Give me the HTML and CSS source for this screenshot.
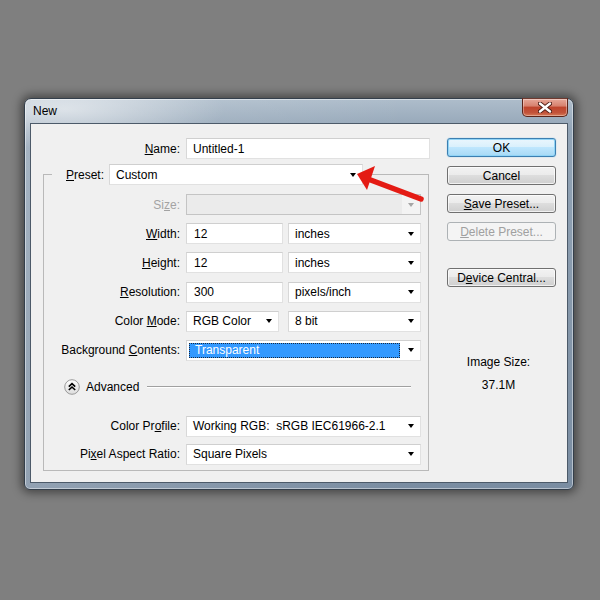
FILE: index.html
```html
<!DOCTYPE html>
<html>
<head>
<meta charset="utf-8">
<title>New</title>
<link rel="stylesheet" href="styles.css">
</head>
<body>
<div class="window">
  <div class="titlebar">
    <span class="title">New</span>
    <div class="close">
      <svg width="14" height="11" viewBox="0 0 14 11"><path d="M2 1.5 L12 9.5 M12 1.5 L2 9.5" stroke="#4a1a12" stroke-width="4.2" stroke-linecap="round"/><path d="M2 1.5 L12 9.5 M12 1.5 L2 9.5" stroke="#ffffff" stroke-width="2.4" stroke-linecap="round"/></svg>
    </div>
  </div>
  <div class="client">
    <div class="main">
      <div class="row name-row">
        <span class="lbl lbl-name"><u>N</u>ame:</span>
        <div class="field input w-name">Untitled-1</div>
      </div>
      <fieldset class="group">
        <legend class="legend">
          <span class="lbl-preset"><u>P</u>reset:</span>
          <div class="field select w-preset">Custom<i class="arr"></i></div>
        </legend>
        <div class="rows">
          <div class="row"><span class="lbl dis">Si<u>z</u>e:</span><div class="field select disabled w-full"><span class="arrbox"><i class="arr grey"></i></span></div></div>
          <div class="row"><span class="lbl"><u>W</u>idth:</span><div class="field input w-num">12</div><div class="field select w-unit">inches<i class="arr"></i></div></div>
          <div class="row"><span class="lbl"><u>H</u>eight:</span><div class="field input w-num">12</div><div class="field select w-unit">inches<i class="arr"></i></div></div>
          <div class="row"><span class="lbl"><u>R</u>esolution:</span><div class="field input w-num">300</div><div class="field select w-unit">pixels/inch<i class="arr"></i></div></div>
          <div class="row"><span class="lbl">Color <u>M</u>ode:</span><div class="field select w-mode">RGB Color<i class="arr"></i></div><div class="field select w-unit">8 bit<i class="arr"></i></div></div>
          <div class="row"><span class="lbl">Background <u>C</u>ontents:</span><div class="field select w-full sel-box"><span class="hl">Transparent</span><i class="arr"></i></div></div>
        </div>
        <div class="adv">
          <span class="adv-btn"><svg width="16" height="16" viewBox="0 0 16 16"><circle cx="8" cy="8" r="7.3" fill="url(#g)" stroke="#9a9a9a"/><defs><linearGradient id="g" x1="0" y1="0" x2="0" y2="1"><stop offset="0" stop-color="#ffffff"/><stop offset="1" stop-color="#dcdcdc"/></linearGradient></defs><path d="M4.8 7.6 L8 4.6 L11.2 7.6 M4.8 11 L8 8 L11.2 11" fill="none" stroke="#000" stroke-width="1.6"/></svg></span>
          <span class="adv-text">Advanced</span>
          <span class="adv-line"></span>
        </div>
        <div class="rows rows2">
          <div class="row"><span class="lbl">Color Pr<u>o</u>file:</span><div class="field select w-full">Working RGB:&nbsp; sRGB IEC61966-2.1<i class="arr"></i></div></div>
          <div class="row"><span class="lbl">Pi<u>x</u>el Aspect Ratio:</span><div class="field select w-full">Square Pixels<i class="arr"></i></div></div>
        </div>
      </fieldset>
    </div>
    <div class="side">
      <div class="btn default">OK</div>
      <div class="btn">Cancel</div>
      <div class="btn"><u>S</u>ave Preset...</div>
      <div class="btn dis-btn"><u>D</u>elete Preset...</div>
      <div class="btn btn-dc">D<u>e</u>vice Central...</div>
      <div class="size-lbl">Image Size:</div>
      <div class="size-val">37.1M</div>
    </div>
  </div>
</div>
<svg class="red-arrow" width="90" height="60" viewBox="0 0 90 60">
  <path d="M28 29 L81 49" stroke="#e41b14" stroke-width="5.5" stroke-linecap="round"/>
  <path d="M17 24 L35 16 L27 40 Z" fill="#e41b14"/>
</svg>
</body>
</html>
```

FILE: styles.css
```css
html, body {
  margin: 0;
  padding: 0;
}
body {
  background: #7f7f7f;
  font-family: "Liberation Sans", Arial, sans-serif;
  font-size: 12px;
  color: #000;
  width: 600px;
  height: 600px;
  overflow: hidden;
  position: relative;
}
u { text-decoration: underline; text-underline-offset: 1px; }

.window {
  margin: 98px 0 0 24px;
  width: 550px;
  height: 392px;
  box-sizing: border-box;
  border: 1px solid #343f4b;
  border-radius: 7px 7px 6px 6px;
  padding: 0 5px;
  display: flex;
  flex-direction: column;
  background:
    radial-gradient(ellipse 160px 40px at 40px 10px, rgba(255,255,255,0.55), rgba(255,255,255,0) 100%),
    linear-gradient(90deg, rgba(255,255,255,0.18), rgba(255,255,255,0) 70%),
    linear-gradient(180deg, #aebdcb 0%, #92a4b6 8%, #8496a9 60%, #7a8da2 100%);
  box-shadow: 0 0 10px 3px rgba(0,0,0,0.45), inset 0 0 0 1px rgba(255,255,255,0.45);
}
.titlebar {
  height: 24px;
  display: flex;
  align-items: flex-start;
}
.title {
  line-height: 24px;
  padding-left: 3px;
  font-size: 12px;
}
.close {
  margin-left: auto;
  margin-top: -1px;
  width: 46px;
  height: 19px;
  box-sizing: border-box;
  border: 1px solid #5c2419;
  border-top-color: #6e3a30;
  border-radius: 0 0 5px 5px;
  background: linear-gradient(180deg, #e7a899 0%, #d7826f 40%, #bf452d 50%, #c2533a 80%, #d67a56 100%);
  box-shadow: inset 0 0 0 1px rgba(255,255,255,0.35);
  display: flex;
  align-items: center;
  justify-content: center;
}
.client {
  height: 360px;
  box-sizing: border-box;
  border: 1px solid #4c5a69;
  background: #f0f0f0;
  display: flex;
}

.main {
  width: 399px;
  padding-top: 14px;
}
.row {
  display: flex;
  align-items: center;
  height: 21px;
}
.lbl {
  width: 136px;
  margin-right: 6px;
  text-align: right;
  white-space: nowrap;
}
.lbl-name { width: 149px; }
.dis { color: #a3a3a3; }

.field {
  height: 21px;
  box-sizing: border-box;
  background: #fff;
  border: 1px solid #e1e1e1;
  border-top-color: #cfcfcf;
  border-left-color: #d8d8d8;
  display: flex;
  align-items: center;
  padding-left: 6px;
  white-space: nowrap;
}
.select { padding-right: 6px; }
.arr {
  margin-left: auto;
  width: 0;
  height: 0;
  border-left: 3.5px solid transparent;
  border-right: 3.5px solid transparent;
  border-top: 4px solid #000;
}
.arr.grey { border-top-color: #a5a5a5; }
.w-name { width: 244px; }
.w-preset { width: 254px; }
.w-full { width: 235px; }
.w-num { width: 97px; margin-right: 5px; padding-left: 7px; }
.w-unit { width: 133px; }
.w-mode { width: 93px; margin-right: 9px; }
.disabled {
  background: #ebebeb;
  border-color: #c4c4c4;
  padding: 0;
}
.arrbox {
  margin-left: auto;
  width: 18px;
  height: 19px;
  background: #f3f3f3;
  display: flex;
  align-items: center;
  justify-content: center;
}
.arrbox .arr { margin: 0; }
.sel-box { padding-left: 2px; }
.hl {
  width: 213px;
  height: 15px;
  box-sizing: border-box;
  background: #3399ff;
  color: #fff;
  border: 1px dotted #1a2a40;
  padding-left: 5px;
  line-height: 13px;
  margin-right: 8px;
}
.sel-box .arr { margin-left: 0; }

.group {
  margin: 5px 0 0 12px;
  padding: 0 7px 0 0;
  width: 386px;
  height: 307px;
  box-sizing: border-box;
  border: 1px solid #b9b9b9;
  min-inline-size: 0;
}
.legend {
  margin-left: 8px;
  padding: 0 0 0 14px;
  display: flex;
  align-items: center;
  height: 21px;
  background: #f0f0f0;
}
.lbl-preset { margin-right: 5px; }

.rows {
  display: flex;
  flex-direction: column;
  gap: 8.2px;
  margin-top: 9px;
}
.rows2 {
  gap: 7px;
  margin-top: 19px;
}
.adv {
  margin-top: 16px;
  height: 20px;
  display: flex;
  align-items: center;
  padding-left: 20px;
  padding-right: 10px;
}
.adv-btn { display: flex; width: 16px; height: 16px; }
.adv-text { margin-left: 6px; }
.adv-line {
  flex: 1;
  margin-left: 8px;
  height: 0;
  border-top: 1px solid #a0a0a0;
  border-bottom: 1px solid #ffffff;
}

.side {
  margin-left: 17px;
  width: 109px;
  padding-top: 14px;
  display: flex;
  flex-direction: column;
}
.btn {
  height: 19px;
  box-sizing: border-box;
  border: 1px solid #707070;
  border-radius: 3px;
  background: linear-gradient(180deg, #f2f2f2 0%, #ebebeb 48%, #dddddd 50%, #cfcfcf 100%);
  box-shadow: inset 0 0 0 1px rgba(255,255,255,0.7);
  display: flex;
  align-items: center;
  justify-content: center;
  margin-bottom: 9px;
  white-space: nowrap;
}
.btn.default {
  border-color: #3c7fb1;
  background: linear-gradient(180deg, #eaf6fd 0%, #d9f0fc 48%, #bee6fd 50%, #a7d9f5 100%);
  box-shadow: inset 0 0 0 1px #90d4f6, 0 0 1px #48a9e0;
}
.dis-btn {
  color: #a0a0a0;
  border-color: #adb2b5;
  background: #f4f4f4;
  box-shadow: none;
}
.btn-dc { margin-top: 18px; }
.size-lbl {
  margin-top: 59px;
  text-align: center;
  line-height: 14px;
  margin-left: -6px;
}
.size-val {
  margin-top: 9px;
  text-align: center;
  line-height: 14px;
  margin-left: -6px;
}

.red-arrow {
  position: absolute;
  left: 340px;
  top: 150px;
}
```
